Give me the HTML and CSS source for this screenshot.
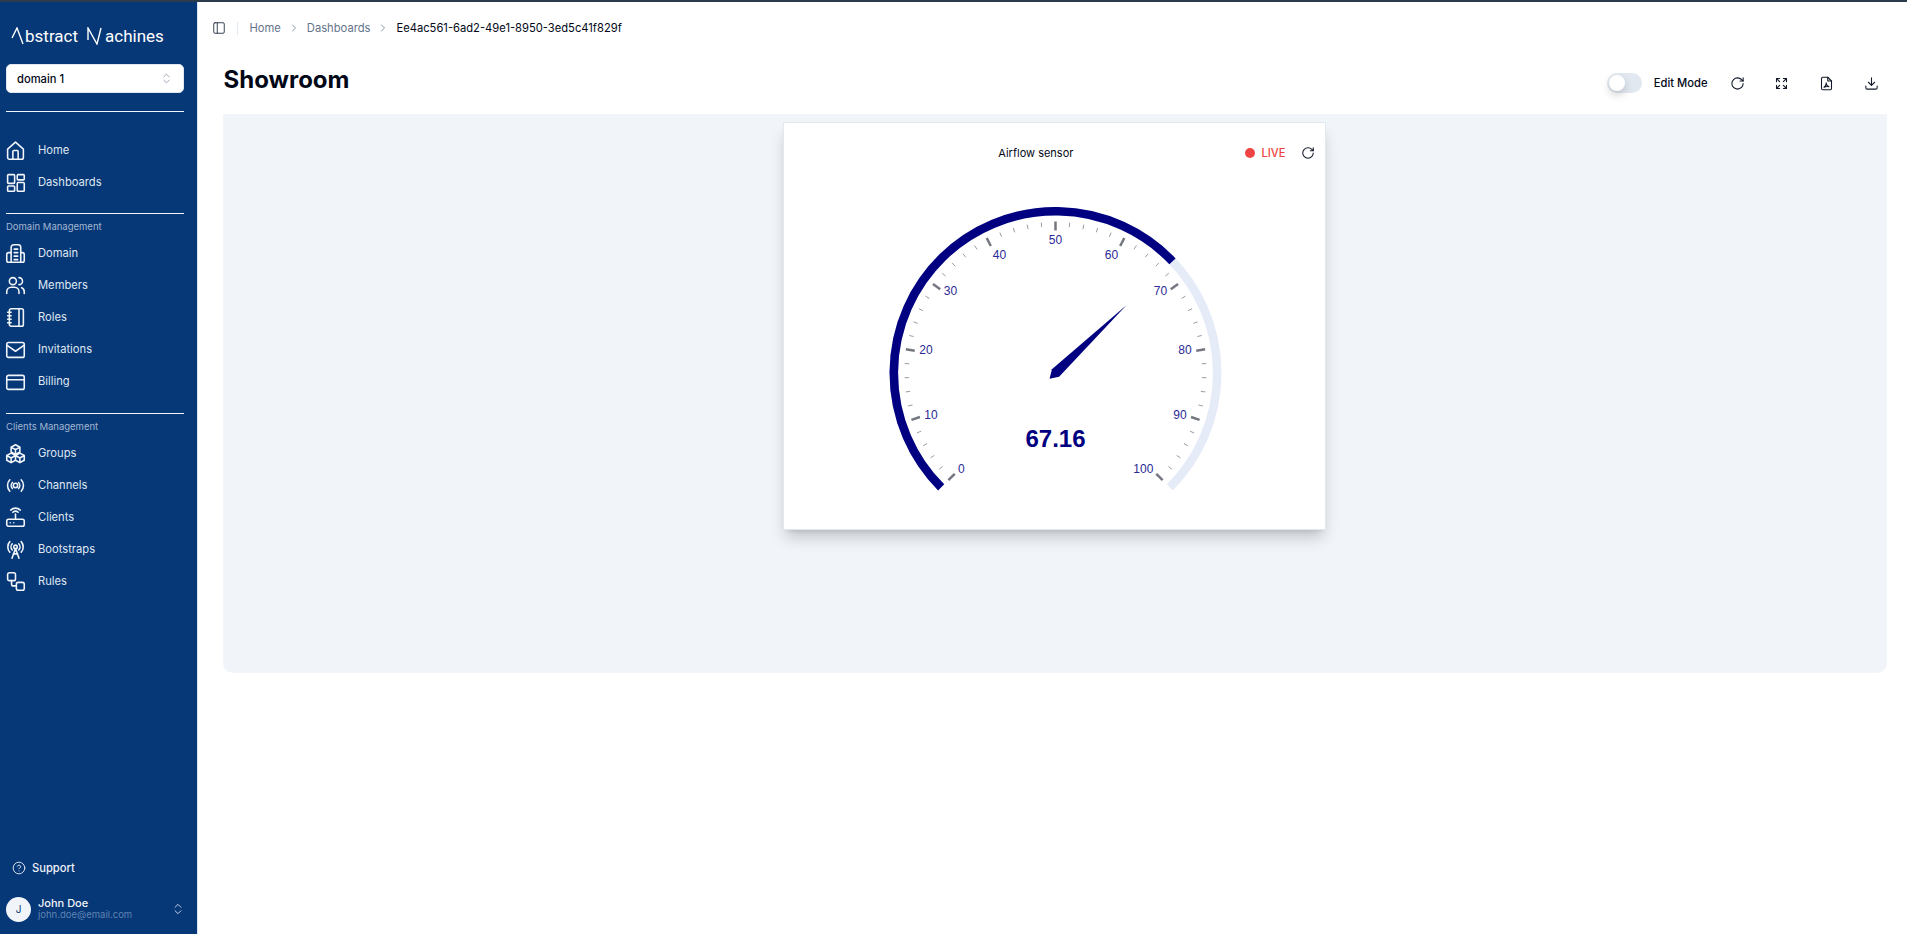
FILE: index.html
```html
<!DOCTYPE html>
<html lang="en">
<head>
<meta charset="utf-8">
<title>Showroom</title>
<link rel="stylesheet" href="styles.css">
</head>
<body>
<div class="app">
  <aside class="sidebar">
    <div class="logo"><svg class="logo-a" viewBox="0 0 14 18"><path d="M1 11 6 1l6 16"/></svg><span>bstract</span><svg class="logo-m" viewBox="0 0 16 18"><path d="M2 13V1l9 16 4-16"/></svg><span>achines</span></div>
    <button class="domain"><span>domain 1</span><svg class="i12" viewBox="0 0 24 24"><path d="m7 15 5 5 5-5M7 9l5-5 5 5"/></svg></button>
    <hr class="rule first">
    <nav class="group main">
      <a class="item"><svg class="ico" viewBox="0 0 24 24"><path d="M3 10.500 12 2.500l9 8V20a2 2 0 0 1-2 2H5a2 2 0 0 1-2-2Z"/><path d="M9 22v-9a1 1 0 0 1 1-1h4a1 1 0 0 1 1 1v9"/></svg>Home</a>
      <a class="item"><svg class="ico" viewBox="0 0 24 24"><rect x="3" y="3" width="8" height="10" rx="1"/><rect x="14" y="3" width="8" height="6" rx="1"/><rect x="14" y="12" width="8" height="10" rx="1"/><rect x="3" y="16" width="8" height="6" rx="1"/></svg>Dashboards</a>
    </nav>
    <hr class="rule">
    <div class="section">Domain Management</div>
    <nav class="group">
      <a class="item"><svg class="ico" viewBox="0 0 24 24"><path d="M7 22V5a3 3 0 0 1 3-3h5a3 3 0 0 1 3 3v17Z"/><path d="M7 11H4a2 2 0 0 0-2 2v7a2 2 0 0 0 2 2h3M18 11h2a2 2 0 0 1 2 2v7a2 2 0 0 1-2 2h-2M10.500 7h4M10.500 11h4M10.500 15h4M10.500 19h4"/></svg>Domain</a>
      <a class="item"><svg class="ico" viewBox="0 0 24 24"><circle cx="9" cy="7" r="4"/><path d="M2 21v-2a5 5 0 0 1 5-5h4a5 5 0 0 1 5 5v2M16 3a4 4 0 0 1 0 8M22 21v-2a5 5 0 0 0-3-4.500"/></svg>Members</a>
      <a class="item"><svg class="ico" viewBox="0 0 24 24"><rect x="5" y="2" width="16" height="20" rx="2"/><path d="M16 2v20M3 6h4M3 10h4M3 14h4M3 18h4"/></svg>Roles</a>
      <a class="item"><svg class="ico" viewBox="0 0 24 24"><rect x="2" y="4" width="20" height="17" rx="2"/><path d="m2 7 10 7 10-7"/></svg>Invitations</a>
      <a class="item"><svg class="ico" viewBox="0 0 24 24"><rect x="2" y="5" width="20" height="16" rx="2"/><path d="M2 10h20"/></svg>Billing</a>
    </nav>
    <hr class="rule">
    <div class="section">Clients Management</div>
    <nav class="group">
      <a class="item"><svg class="ico" viewBox="0 0 24 24"><path d="m12 2 5 2.800v5.400L12 13l-5-2.800V4.800ZM7 11.500l5 2.800v5.400L7 22.500l-5-2.800v-5.400ZM17 11.500l5 2.800v5.400l-5 2.800-5-2.800v-5.400ZM7 4.800l5 2.800 5-2.800M12 7.600V13M2 14.300l5 2.800 5-2.800 5 2.800 5-2.800M7 17.100v5.400M17 17.100v5.400"/></svg>Groups</a>
      <a class="item"><svg class="ico" viewBox="0 0 24 24"><circle cx="12" cy="12" r="2.500"/><path d="M5.500 5.500a9.500 9.500 0 0 0 0 13M18.500 5.500a9.500 9.500 0 0 1 0 13M8.500 8.500a5 5 0 0 0 0 7M15.500 8.500a5 5 0 0 1 0 7"/></svg>Channels</a>
      <a class="item"><svg class="ico" viewBox="0 0 24 24"><rect x="2" y="14" width="20" height="8" rx="2"/><path d="M12 14V8M6 18h.01M10 18h.01M9 6a4.500 4.500 0 0 1 6 0M6.500 3.500a8 8 0 0 1 11 0"/></svg>Clients</a>
      <a class="item"><svg class="ico" viewBox="0 0 24 24"><circle cx="12" cy="9" r="2"/><path d="M12 11 8 22M12 11l4 11M9.500 17h5M5.500 3a9 9 0 0 0 0 12M18.500 3a9 9 0 0 1 0 12M8.300 5.500a5 5 0 0 0 0 7M15.700 5.500a5 5 0 0 1 0 7"/></svg>Bootstraps</a>
      <a class="item"><svg class="ico" viewBox="0 0 24 24"><rect x="3" y="2" width="9" height="9" rx="2"/><rect x="13" y="13" width="9" height="9" rx="2"/><path d="M7.500 11v4a2 2 0 0 0 2 2H13"/></svg>Rules</a>
    </nav>
    <div class="spacer"></div>
    <a class="support"><svg class="i16" viewBox="0 0 24 24"><circle cx="12" cy="12" r="10"/><path d="M9.100 9a3 3 0 0 1 5.800 1c0 2-3 3-3 3M12 17h.01"/></svg>Support</a>
    <div class="user">
      <div class="avatar">J</div>
      <div class="who"><div class="name">John Doe</div><div class="mail">john.doe@email.com</div></div>
      <svg class="i16 updown" viewBox="0 0 24 24"><path d="m7 15 5 5 5-5M7 9l5-5 5 5"/></svg>
    </div>
  </aside>
  <main class="content">
    <header class="crumbs">
      <svg class="panel" viewBox="0 0 24 24"><rect x="3" y="3" width="18" height="18" rx="2"/><path d="M9 3v18"/></svg>
      <span class="sep"></span>
      <span class="crumb">Home</span>
      <svg class="chev" viewBox="0 0 24 24"><path d="m9 18 6-6-6-6"/></svg>
      <span class="crumb">Dashboards</span>
      <svg class="chev" viewBox="0 0 24 24"><path d="m9 18 6-6-6-6"/></svg>
      <span class="crumb current">Ee4ac561-6ad2-49e1-8950-3ed5c41f829f</span>
    </header>
    <div class="titlebar">
      <h1>Showroom</h1>
      <div class="tools">
        <span class="switch"><span class="knob"></span></span>
        <span class="edit">Edit Mode</span>
        <svg class="tool tool-tight" viewBox="0 0 24 24"><path d="M21 12a9 9 0 1 1-9-9c2.500 0 4.900 1 6.700 2.700L21 8"/><path d="M21 3v5h-5"/></svg>
        <svg class="tool" viewBox="0 0 24 24"><path d="M4 9V4h5M4 4l5 5M20 9V4h-5M20 4l-5 5M4 15v5h5M4 20l5-5M20 15v5h-5M20 20l-5-5"/></svg>
        <svg class="tool" viewBox="0 0 24 24"><path d="M14 2H6a2 2 0 0 0-2 2v16a2 2 0 0 0 2 2h12a2 2 0 0 0 2-2V8Z"/><path d="M14 2v6h6M8 18c2-1 3.500-4 3.500-7 0 3 2 5 4.500 6-2.500-.5-5.500 0-8 1Z"/></svg>
        <svg class="tool" viewBox="0 0 24 24"><path d="M12 3v12M7 10l5 5 5-5M3 16v3a2 2 0 0 0 2 2h14a2 2 0 0 0 2-2v-3"/></svg>
      </div>
    </div>
    <section class="canvas">
      <article class="card">
        <div class="card-head">
          <div class="card-title">Airflow sensor</div>
          <div class="live"><span class="dot"></span>LIVE</div>
          <svg class="card-refresh" viewBox="0 0 24 24"><path d="M21 12a9 9 0 1 1-9-9c2.500 0 4.900 1 6.700 2.700L21 8"/><path d="M21 3v5h-5"/></svg>
        </div>
        <svg id="gauge" class="gauge" viewBox="0 0 541 406" width="541" height="406"></svg>
      </article>
    </section>
  </main>
</div>
<script src="gauge.js"></script>
</body>
</html>
```
FILE: styles.css
```css
* { box-sizing: border-box; }
html, body { margin: 0; height: 100%; background: #fff; overflow: hidden; }
body { font-family: Inter, "Liberation Sans", sans-serif; color: #020817; }
.app { display: flex; height: 934px; border-top: 2px solid #2d3b4e; }
svg { fill: none; stroke: currentColor; stroke-width: 2; stroke-linecap: round; stroke-linejoin: round; flex: none; }

.sidebar { width: 198px; flex: none; background: #063777; border-right: 1px solid #dbe4f3; color: #e4ebf5; padding: 0 6px; display: flex; flex-direction: column; }
.logo { display: flex; align-items: center; height: 20px; margin: 24px 0 0 5px; color: #fff; font: 400 17px Roboto, sans-serif; }
.logo svg { stroke-width: 1.400; stroke-linecap: butt; stroke-linejoin: miter; height: 18px; }
.logo-a { width: 14px; }
.logo-m { width: 16px; margin: 0 3px 0 8px; }
.domain { display: flex; align-items: center; justify-content: space-between; width: 178px; height: 29px; margin-top: 18px; padding: 0 10px 0 10px; border: 1px solid #e2e8f0; border-radius: 5px; background: #fff; color: #020817; font: 500 11.2px Inter, sans-serif; }
.i12 { width: 13px; height: 13px; color: #8a94a6; stroke-width: 1.500; }
.rule { width: 178px; height: 1px; margin: 0; border: 0; background: #f1f5f9; flex: none; }
.rule.first { margin-top: 18px; }
.group { display: flex; flex-direction: column; gap: 6px; margin-bottom: 18.500px; }
.group.main { margin-top: 25px; margin-bottom: 17.500px; }
.item { display: flex; align-items: center; height: 26px; font-size: 11.2px; font-weight: 400; color: #dfe7f2; }
.ico { width: 21px; height: 21px; margin: 0 12px 0 -1px; stroke-width: 1.800; color: #f1f5f9; }
.section { height: 14px; margin: 6px 0 6.500px; font-size: 9.500px; line-height: 14px; color: #a3b7d2; }
.spacer { flex: 1; }
.support { display: flex; align-items: center; gap: 6px; margin: 0 0 22px 6px; font-size: 11.2px; font-weight: 500; color: #eef2f8; }
.i16 { width: 14px; height: 14px; stroke-width: 1.500; }
.user { display: flex; align-items: center; gap: 7px; height: 25px; margin-bottom: 12.500px; }
.avatar { width: 25px; height: 25px; border-radius: 50%; background: #f1f5f9; color: #063777; font-size: 10px; display: flex; align-items: center; justify-content: center; }
.who { flex: 1; line-height: 11px; }
.name { font-size: 11px; font-weight: 500; color: #f1f5f9; }
.mail { font-size: 9.500px; color: #5f84b3; }
.updown { margin-right: 6px; width: 14px; color: #dfe7f2; }

.content { flex: 1; min-width: 0; display: flex; flex-direction: column; padding: 0 20px 0 25px; }
.crumbs { display: flex; align-items: center; height: 16px; margin: 18px 0 0 -11.500px; font-size: 11.2px; }
.panel { width: 14px; height: 14px; color: #1e293b; stroke-width: 1.500; }
.sep { width: 1px; height: 13px; margin: 0 12px 0 11px; background: #e2e8f0; }
.crumb { color: #64748b; }
.crumb.current { color: #020817; }
.chev { width: 12px; height: 12px; margin: 0 7px; color: #64748b; stroke-width: 1.500; }
.titlebar { display: flex; align-items: flex-start; justify-content: space-between; height: 52px; margin-top: 26px; flex: none; }
h1 { margin: 0 0 0 .5px; font-size: 24px; line-height: 36px; font-weight: 700; color: #020817; }
.tools { display: flex; align-items: center; height: 20px; margin-top: 11px; }
.switch { width: 35px; height: 20px; padding: 2px; border-radius: 10px; background: #e2e8f0; margin-right: 12px; }
.knob { display: block; width: 16px; height: 16px; border-radius: 50%; background: #fff; box-shadow: 0 4px 8px rgba(0,0,0,.18); }
.edit { font-size: 11.2px; font-weight: 500; margin-right: 22px; }
.tool { width: 15px; height: 15px; margin-right: 30px; stroke-width: 1.700; color: #111827; }
.tool-tight { margin-right: 29px; }
.tool:last-child { margin-right: 8.500px; }

.canvas { height: 559px; flex: none; background: #f1f4f9; border-radius: 0 0 10px 10px; display: flex; justify-content: center; padding-top: 8px; }
.card { width: 543px; height: 408px; margin-right: 1px; background: #fff; border: 1px solid #e2e8f0; box-shadow: 0 10px 15px -3px rgba(0,0,0,.2), 0 4px 6px -4px rgba(0,0,0,.14); position: relative; }
.card-head { position: absolute; left: 0; top: 0; right: 0; height: 50px; }
.card-title { position: absolute; left: 214.300px; top: 23px; font-size: 11px; line-height: 14px; color: #020817; }
.live { position: absolute; left: 461px; top: 23px; height: 14px; display: flex; align-items: center; gap: 6.500px; font-size: 11.2px; font-weight: 500; color: #ef4444; }
.dot { width: 10px; height: 10px; border-radius: 50%; background: #ef4444; }
.card-refresh { position: absolute; left: 517.300px; top: 23px; width: 14px; height: 14px; stroke-width: 1.800; color: #111827; }
.gauge { display: block; stroke: none; }
.arc { fill: none; stroke-width: 8.600; stroke-linecap: butt; }
.arc-on { stroke: #000080; }
.arc-off { stroke: #e6ebf8; }
.tick { stroke: #9a9ca6; stroke-linecap: butt; stroke-width: 1; }
.tick-major { stroke: #74777f; stroke-width: 2.500; }
.label { fill: #2a2a95; stroke: none; font: 12px "Liberation Sans", Arial, sans-serif; text-anchor: middle; dominant-baseline: central; }
.needle { fill: #000080; stroke: none; }
.value { fill: #000080; stroke: none; font: 700 24px "Liberation Sans", Arial, sans-serif; text-anchor: middle; dominant-baseline: central; }
```
FILE: gauge.js
```js
(function () {
  var NS = 'http://www.w3.org/2000/svg';
  var svg = document.getElementById('gauge');
  var cx = 271.5, cy = 250, R = 161.7, value = 67.16;
  /* label centres relative to the gauge centre, as the chart library aligns them */
  var labels = {
    0: [-94.2, 96], 10: [-124.5, 42], 20: [-129.5, -23], 30: [-105, -82], 40: [-56, -118],
    50: [0, -133.3], 60: [56, -118], 70: [105, -82], 80: [129.5, -23], 90: [124.5, 42], 100: [87.8, 96]
  };
  function add(tag, attrs, text) {
    var el = document.createElementNS(NS, tag);
    Object.keys(attrs).forEach(function (k) { el.setAttribute(k, attrs[k]); });
    if (text !== undefined) el.textContent = text;
    svg.appendChild(el);
  }
  function ang(v) { return (225 - v * 2.7) * Math.PI / 180; }
  function pt(v, r) { return [cx + Math.cos(ang(v)) * r, cy - Math.sin(ang(v)) * r]; }
  function arc(a, b, cls) {
    var p = pt(a, R), q = pt(b, R), large = (b - a) * 2.7 > 180 ? 1 : 0;
    add('path', { d: 'M' + p[0] + ' ' + p[1] + 'A' + R + ' ' + R + ' 0 ' + large + ' 1 ' + q[0] + ' ' + q[1], 'class': 'arc ' + cls });
  }
  arc(0, 100, 'arc-off');
  arc(0, value, 'arc-on');
  for (var i = 0; i <= 50; i++) {
    var v = i * 2, major = i % 5 === 0;
    var a = pt(v, major ? 151.5 : 151), b = pt(v, major ? 142.5 : 146.5);
    add('line', { x1: a[0], y1: a[1], x2: b[0], y2: b[1], 'class': major ? 'tick tick-major' : 'tick' });
    if (major) {
      add('text', { x: cx + labels[v][0], y: cy + labels[v][1], 'class': 'label' }, String(v));
    }
  }
  var t = ang(value), w = 5.2, tail = 8.2, r = 98;
  var dx = Math.cos(t), dy = -Math.sin(t), nx = -dy, ny = dx;
  var pts = [
    [cx - dx * tail, cy - dy * tail],
    [cx + nx * w, cy + ny * w],
    [cx + dx * r, cy + dy * r],
    [cx - nx * w, cy - ny * w]
  ];
  add('polygon', { points: pts.map(function (p) { return p.join(','); }).join(' '), 'class': 'needle' });
  add('text', { x: cx, y: 315, 'class': 'value' }, value.toFixed(2));
})();
```
